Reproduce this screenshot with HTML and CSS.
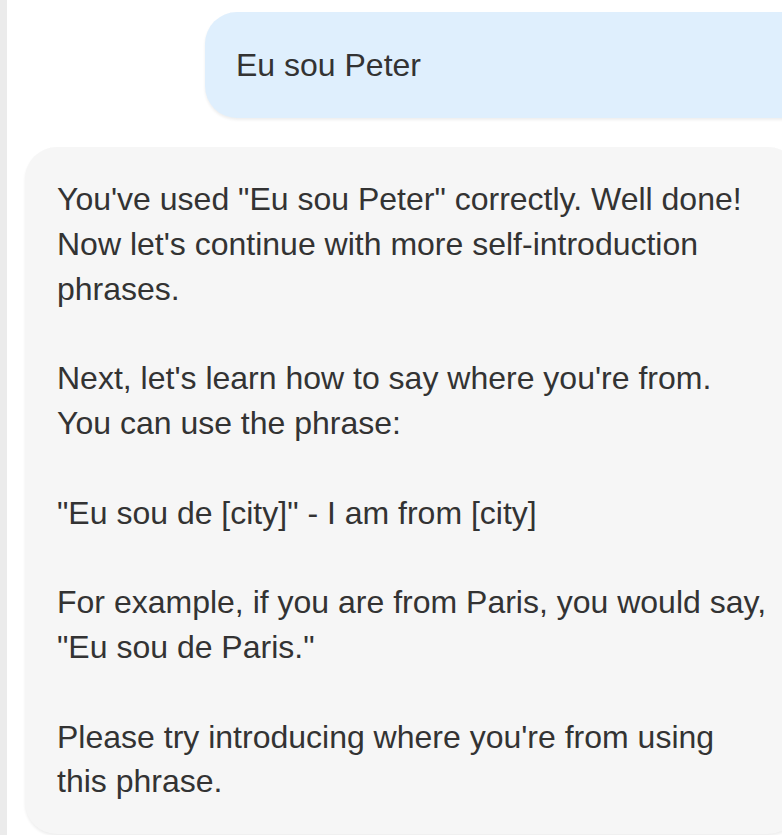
FILE: index.html
```
<!DOCTYPE html>
<html lang="en">
<head>
<meta charset="utf-8">
<title>Chat</title>
<link rel="stylesheet" href="styles.css">
</head>
<body>
<div class="page">
  <div class="rail"></div>
  <main class="chat">
    <div class="msg user">Eu sou Peter</div>
    <div class="msg bot">
      <p>You've used "Eu sou Peter" correctly. Well done! Now let's continue with more self-introduction phrases.</p>
      <p>Next, let's learn how to say where you're from. You can use the phrase:</p>
      <p>"Eu sou de [city]" - I am from [city]</p>
      <p>For example, if you are from Paris, you would say, "Eu sou de Paris."</p>
      <p>Please try introducing where you're from using this phrase.</p>
    </div>
  </main>
</div>
</body>
</html>
```

FILE: styles.css
```
html, body {
  margin: 0;
  padding: 0;
  background: #ffffff;
  overflow: hidden;
}
body {
  font-family: "Liberation Sans", Arial, sans-serif;
  color: #333333;
}
.page {
  display: flex;
  min-height: 835px;
}
.rail {
  flex: 0 0 7px;
  background: #ebebeb;
}
.chat {
  flex: 1;
  display: flex;
  flex-direction: column;
  padding: 12px 0 0 18px;
  gap: 29px;
  min-width: 0;
}
.msg {
  border-radius: 32px;
  box-shadow: 0 2px 3px rgba(0, 0, 0, 0.07);
  font-size: 32px;
}
.user {
  align-self: flex-end;
  margin-right: -60px;
  width: 637px;
  background: #dfeffd;
  line-height: 46px;
  padding: 30px 31px;
  box-sizing: border-box;
}
.bot {
  background: #f6f6f6;
  line-height: 44.8px;
  padding: 30px 30px 30px 32px;
  margin-right: -18px;
}
.bot p {
  margin: 0 0 44.8px 0;
}
.bot p:last-child {
  margin-bottom: 0;
}
```
